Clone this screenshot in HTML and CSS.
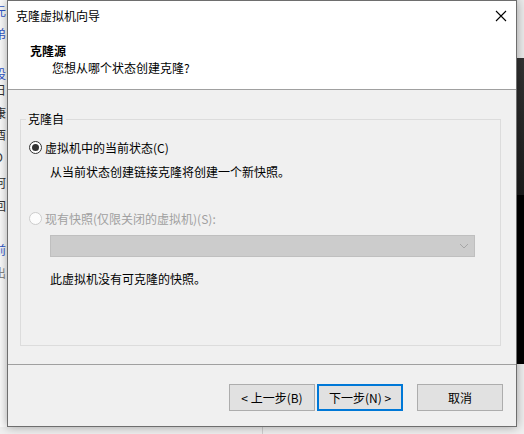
FILE: index.html
```html
<!DOCTYPE html>
<html lang="zh-CN">
<head>
    <meta charset="UTF-8">
    <meta name="viewport" content="width=device-width, initial-scale=1.0">
    <title>克隆虚拟机向导</title>
    <link rel="stylesheet" href="styles.css">
</head>
<body>
    <div class="desktop">
        <!-- window behind, only its right edge shows -->
        <div class="behind-left">
            <span class="blue" style="top: 4px">元</span>
            <span class="blue" style="top: 27px">弟</span>
            <span class="blue" style="top: 67px">设</span>
            <span style="top: 83px">日</span>
            <span style="top: 106px">康</span>
            <span style="top: 128px">酉</span>
            <span style="top: 150px">O</span>
            <span style="top: 176px">阿</span>
            <span style="top: 199px">回</span>
            <span class="blue" style="top: 243px">前</span>
            <span class="grey" style="top: 266px">出</span>
        </div>
        <div class="behind-right"></div>
        <div class="behind-bottom"></div>

        <!-- wizard -->
        <div class="dialog">
            <div class="header">
                <div class="titlebar">
                    <span class="title">克隆虚拟机向导</span>
                    <svg class="close" width="12" height="12" viewBox="0 0 12 12">
                        <path d="M1 1 L11 11 M11 1 L1 11" stroke="#000" stroke-width="1.1" fill="none"/>
                    </svg>
                </div>
                <div class="page-title">克隆源</div>
                <div class="page-sub">您想从哪个状态创建克隆?</div>
            </div>

            <div class="content">
                <fieldset class="group">
                    <legend>克隆自</legend>
                    <div class="group-body">
                        <div class="option">
                            <span class="radio checked"></span>
                            <span>虚拟机中的当前状态(C)</span>
                        </div>
                        <p class="note first">从当前状态创建链接克隆将创建一个新快照。</p>

                        <div class="option disabled">
                            <span class="radio"></span>
                            <span>现有快照(仅限关闭的虚拟机)(S):</span>
                        </div>
                        <div class="combo">
                            <svg class="chevron" width="10" height="6" viewBox="0 0 10 6">
                                <path d="M1 1 L5 5 L9 1" stroke="#a6a6a6" stroke-width="1" fill="none"/>
                            </svg>
                        </div>
                        <p class="note last">此虚拟机没有可克隆的快照。</p>
                    </div>
                </fieldset>
            </div>

            <div class="footer">
                <button class="btn">&lt; 上一步(B)</button>
                <button class="btn default">下一步(N) &gt;</button>
                <button class="btn cancel">取消</button>
            </div>
        </div>
    </div>
</body>
</html>
```

FILE: styles.css
```css
body {
    margin: 0;
    padding: 0;
    font-family: "Noto Sans CJK SC", "Noto Sans", sans-serif;
    font-size: 12px;
    color: #000;
    background: #f3f3f3;
    overflow: hidden;
}

.desktop {
    position: relative;
    width: 524px;
    height: 434px;
    overflow: hidden;
}

/* ---- things behind the dialog ---- */
.behind-left {
    position: absolute;
    left: 0;
    top: 0;
    width: 8px;
    height: 434px;
    background: #fbfbfb;
    overflow: hidden;
}

.behind-left span {
    position: absolute;
    left: -6px;
    font-size: 12px;
    line-height: 14px;
    color: #333;
}

.behind-left .blue {
    color: #2f55c8;
}

.behind-left .grey {
    color: #888;
}

.behind-right {
    position: absolute;
    left: 516px;
    top: 0;
    width: 8px;
    height: 434px;
    background: linear-gradient(to bottom,
        #ececec 0, #ececec 58px,
        #333 58px, #1c1c1c 195px,
        #000 195px, #000 364px,
        #f0f0f0 364px);
}

.behind-bottom {
    position: absolute;
    left: 0;
    top: 427px;
    width: 524px;
    height: 7px;
    background: #f0f0f0;
}

.behind-bottom::after {
    content: '';
    position: absolute;
    left: 262px;
    top: 0;
    width: 1px;
    height: 7px;
    background: #cfcfcf;
}

/* ---- dialog ---- */
.dialog {
    position: absolute;
    left: 7px;
    top: 0;
    width: 510px;
    height: 427px;
    box-sizing: border-box;
    border: 1px solid #6e6e6e;
    background: #f0f0f0;
    box-shadow: 0 0 10px rgba(0, 0, 0, 0.35);
    display: flex;
    flex-direction: column;
}

.header {
    background: #fff;
    height: 88px;
    border-bottom: 1px solid #a0a0a0;
}

.titlebar {
    height: 30px;
    display: flex;
    align-items: center;
    justify-content: space-between;
    padding: 0 9px 0 8px;
}

.title {
    line-height: 30px;
}

.close {
    display: block;
}

.page-title {
    margin-top: 11px;
    padding-left: 22px;
    font-weight: bold;
    line-height: 17px;
}

.page-sub {
    padding-left: 44px;
    line-height: 17px;
}

.content {
    height: 274px;
    padding: 21px 0 0 12px;
    box-sizing: border-box;
}

.group {
    margin: 0;
    padding: 0;
    width: 481px;
    height: 235px;
    box-sizing: border-box;
    border: 1px solid #dcdcdc;
}

.group legend {
    margin-left: 5px;
    padding: 0 2px;
    line-height: 16px;
}

.group-body {
    padding: 10px 0 0 8px;
}

.option {
    display: flex;
    align-items: center;
    gap: 3px;
    height: 20px;
}

.option.disabled {
    color: #a0a0a0;
    margin-top: 28px;
}

.radio {
    width: 13px;
    height: 13px;
    box-sizing: border-box;
    border: 1px solid #333;
    border-radius: 50%;
    background: #fff;
    display: flex;
    align-items: center;
    justify-content: center;
}

.radio.checked::after {
    content: '';
    width: 7px;
    height: 7px;
    border-radius: 50%;
    background: #333;
}

.disabled .radio {
    border-color: #cccccc;
    background: #fcfcfc;
}

.note {
    margin: 0;
    padding-left: 21px;
    line-height: 16px;
}

.note.first {
    margin-top: 7px;
}

.note.last {
    margin-top: 14px;
}

.combo {
    margin: 7px 0 0 21px;
    width: 425px;
    height: 22px;
    box-sizing: border-box;
    background: #cccccc;
    border: 1px solid #bfbfbf;
    display: flex;
    align-items: center;
    justify-content: flex-end;
    padding-right: 5px;
}

.footer {
    flex: 1;
    border-top: 1px solid #a0a0a0;
    display: flex;
    justify-content: flex-end;
    align-items: flex-start;
    gap: 2px;
    padding: 19px 13px 0 0;
}

.btn {
    width: 86px;
    height: 27px;
    box-sizing: border-box;
    background: #e1e1e1;
    border: 1px solid #adadad;
    font-family: inherit;
    font-size: 12px;
    color: #000;
    padding: 0;
    line-height: 16px;
}

.btn.default {
    border: 2px solid #0078d7;
}

.btn.cancel {
    margin-left: 12px;
}
```
